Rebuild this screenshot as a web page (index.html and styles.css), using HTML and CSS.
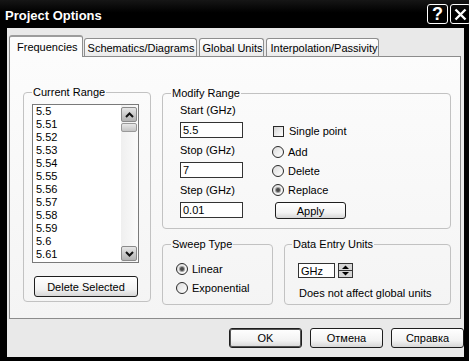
FILE: index.html
```html
<!DOCTYPE html>
<html lang="en">
  <head>
    <meta charset="UTF-8" />
    <title>Project Options</title>
    <link rel="stylesheet" href="styles.css">
  </head>

  <body>
    <div class="window">
      <div class="titlebar">
        <span class="title">Project Options</span>
        <div class="caption-buttons">
          <span class="cap-btn">?</span>
          <span class="cap-btn">
            <svg width="13" height="13" viewBox="0 0 13 13">
              <path d="M1.5 1.5 L11.5 11.5 M11.5 1.5 L1.5 11.5" stroke="#fff" stroke-width="2.4" />
            </svg>
          </span>
        </div>
      </div>

      <div class="client">
        <div class="tabs">
          <div class="tab active">Frequencies</div>
          <div class="tab">Schematics/Diagrams</div>
          <div class="tab">Global Units</div>
          <div class="tab">Interpolation/Passivity</div>
        </div>

        <div class="panel">
          <fieldset class="group range">
            <legend>Current Range</legend>
            <div class="listbox">
              <ul class="list">
                <li>5.5</li>
                <li>5.51</li>
                <li>5.52</li>
                <li>5.53</li>
                <li>5.54</li>
                <li>5.55</li>
                <li>5.56</li>
                <li>5.57</li>
                <li>5.58</li>
                <li>5.59</li>
                <li>5.6</li>
                <li>5.61</li>
              </ul>
              <div class="scrollbar">
                <div class="sb-btn">
                  <svg width="9" height="6" viewBox="0 0 9 6"><path d="M1 5 L4.5 1.5 L8 5" fill="none" stroke="#111" stroke-width="2" /></svg>
                </div>
                <div class="sb-thumb"></div>
                <div class="sb-btn down">
                  <svg width="9" height="6" viewBox="0 0 9 6"><path d="M1 1 L4.5 4.5 L8 1" fill="none" stroke="#111" stroke-width="2" /></svg>
                </div>
              </div>
            </div>
            <button class="btn delete">Delete Selected</button>
          </fieldset>

          <div class="right">
            <fieldset class="group modify">
              <legend>Modify Range</legend>
              <div class="modify-body">
                <div class="inputs">
                  <label class="field-label">Start (GHz)</label>
                  <input class="field" value="5.5">
                  <label class="field-label">Stop (GHz)</label>
                  <input class="field" value="7">
                  <label class="field-label">Step (GHz)</label>
                  <input class="field" value="0.01">
                </div>
                <div class="choices">
                  <div class="option check-row"><span class="check"></span>Single point</div>
                  <div class="option"><span class="radio"></span>Add</div>
                  <div class="option"><span class="radio"></span>Delete</div>
                  <div class="option"><span class="radio on"></span>Replace</div>
                  <button class="btn apply">Apply</button>
                </div>
              </div>
            </fieldset>

            <div class="bottom-row">
              <fieldset class="group sweep">
                <legend>Sweep Type</legend>
                <div class="option"><span class="radio on"></span>Linear</div>
                <div class="option"><span class="radio"></span>Exponential</div>
              </fieldset>

              <fieldset class="group units">
                <legend>Data Entry Units</legend>
                <div class="units-row">
                  <input class="field unit-field" value="GHz">
                  <svg class="spin" width="15" height="15" viewBox="0 0 15 15">
                    <rect x="0.5" y="0.5" width="14" height="14" fill="#d6d6d6" stroke="#333" />
                    <line x1="1" y1="7.5" x2="14" y2="7.5" stroke="#333" />
                    <path d="M4 6 L7.5 2.5 L11 6 Z" fill="#000" />
                    <path d="M4 9 L7.5 12.5 L11 9 Z" fill="#000" />
                  </svg>
                </div>
                <p class="units-note">Does not affect global units</p>
              </fieldset>
            </div>
          </div>
        </div>

        <div class="actions">
          <button class="btn action default">OK</button>
          <button class="btn action">Отмена</button>
          <button class="btn action">Справка</button>
        </div>
      </div>
    </div>
  </body>
</html>
```

FILE: styles.css
```css
* {
  box-sizing: border-box;
  margin: 0;
  padding: 0;
}

body {
  font-family: "Liberation Sans", Arial, sans-serif;
  font-size: 11px;
  color: #000;
  background-color: #000;
}

.window {
  width: 469px;
  height: 361px;
  background-color: #000;
  display: flex;
  flex-direction: column;
  overflow: hidden;
}

/* title bar */
.titlebar {
  height: 28px;
  flex: none;
  display: flex;
  align-items: center;
  justify-content: space-between;
  padding-left: 5px;
  color: #fff;
  background: linear-gradient(#161616, #000 45%);
}

.title {
  font-size: 13px;
  font-weight: bold;
  margin-top: 2px;
}

.caption-buttons {
  display: flex;
  gap: 2px;
  align-self: flex-start;
  margin-top: 4px;
  margin-right: -2px;
}

.cap-btn {
  width: 21px;
  height: 20px;
  border: 1px solid #fff;
  border-radius: 3px;
  display: flex;
  align-items: center;
  justify-content: center;
  font-size: 18px;
  font-weight: bold;
}

/* dialog body */
.client {
  flex: 1;
  margin: 0 5px 4px 7px;
  padding: 7px 3px 0 2px;
  background-color: #e9e9e9;
  display: flex;
  flex-direction: column;
}

.tabs {
  display: flex;
  align-items: flex-end;
  height: 22px;
  margin-bottom: -1px;
  position: relative;
  z-index: 1;
}

.tab {
  height: 18px;
  margin-bottom: 1px;
  margin-right: 2px;
  padding: 2px 1px 0 3px;
  line-height: 14px;
  border: 1px solid #8e8e8e;
  border-bottom: none;
  border-radius: 3px 3px 0 0;
  background: linear-gradient(#fff, #ebebeb);
  white-space: nowrap;
}

.tab.active {
  height: 22px;
  margin-bottom: 0;
  margin-right: 1px;
  padding: 3px 4px 0 7px;
  border-top: 2px solid #9c9c9c;
  background: #fcfcfc;
}

.panel {
  flex: none;
  height: 263px;
  border: 1px solid #8c8c8c;
  background: linear-gradient(#fcfcfc, #f4f4f4);
  display: grid;
  grid-template-columns: 128px 289px;
  column-gap: 11px;
  align-items: start;
  padding: 29px 0 0 13px;
}

/* group boxes */
.group {
  border: 1px solid #c2c2c2;
  border-radius: 4px;
  min-width: 0;
}

.group legend {
  padding: 0 1px;
  line-height: 13px;
}

.range {
  padding: 5px 11px 4px 8px;
}

.listbox {
  display: flex;
  height: 159px;
  border: 1px solid #7a7a7a;
  background-color: #fff;
}

.list {
  flex: 1;
  list-style: none;
  padding-left: 3px;
  overflow: hidden;
}

.list li {
  line-height: 13px;
}

.scrollbar {
  width: 17px;
  display: flex;
  flex-direction: column;
  padding: 2px 1px 1px 0;
  background: linear-gradient(90deg, #efefef, #fbfbfb);
}

.sb-btn {
  height: 15px;
  border: 1px solid #8a8a8a;
  border-radius: 2px;
  background: linear-gradient(#e6e6e6, #b2b2b2);
  display: flex;
  align-items: center;
  justify-content: center;
}

.sb-btn.down {
  margin-top: auto;
}

.sb-thumb {
  height: 9px;
  margin-top: 1px;
  border: 1px solid #999;
  border-radius: 2px;
  background: linear-gradient(#e8e8e8, #c4c4c4);
}

/* buttons */
.btn {
  font: inherit;
  color: #000;
  border: 1px solid #1e1e1e;
  border-radius: 3px;
  background: linear-gradient(#fff, #f2f2f2 65%, #d6d6d6);
}

.delete {
  display: block;
  width: 104px;
  height: 21px;
  margin: 13px 0 0 2px;
}

.apply {
  width: 71px;
  height: 17px;
  margin: 5px 0 0 3px;
}

/* modify range */
.right {
  display: flex;
  flex-direction: column;
  margin-top: 1px;
}

.modify {
  padding: 4px 0 9px 8px;
}

.modify-body {
  display: flex;
  gap: 29px;
  padding-left: 9px;
}

.inputs {
  width: 63px;
}

.field-label {
  display: block;
  line-height: 13px;
  margin-bottom: 5px;
}

.field {
  display: block;
  width: 63px;
  height: 16px;
  margin-bottom: 6px;
  padding: 0 2px;
  border: 1px solid #333;
  background-color: #fff;
  font: inherit;
  color: #000;
  outline: none;
}

.field:last-child {
  margin-bottom: 0;
}

.choices {
  display: flex;
  flex-direction: column;
  align-items: flex-start;
}

.option {
  display: flex;
  align-items: center;
  gap: 4px;
  height: 14px;
  margin-top: 5px;
  white-space: nowrap;
}

.check-row {
  gap: 5px;
  margin-top: 20px;
  margin-bottom: 2px;
}

.check {
  width: 11px;
  height: 11px;
  margin-left: 1px;
  border: 1px solid #2a2a2a;
  background: linear-gradient(135deg, #d4d4d4, #fff);
}

.radio {
  flex: none;
  width: 12px;
  height: 12px;
  border: 1px solid #2a2a2a;
  border-radius: 50%;
  background: linear-gradient(135deg, #dcdcdc, #fff);
  display: flex;
  align-items: center;
  justify-content: center;
}

.radio.on::after {
  content: "";
  width: 4px;
  height: 4px;
  border-radius: 50%;
  background-color: #4a4a4a;
  box-shadow: 0 0 0 1px #a0a0a0;
}

/* bottom groups */
.bottom-row {
  display: flex;
  gap: 11px;
  margin-top: 9px;
}

.sweep {
  width: 111px;
  padding: 6px 0 9px 8px;
}

.sweep .option {
  padding-left: 5px;
}

.units {
  flex: 1;
  padding: 12px 0 4px 7px;
}

.units-row {
  display: flex;
  align-items: center;
  margin-left: 6px;
}

.unit-field {
  width: 37px;
  height: 15px;
  margin: 0;
}

.spin {
  margin-left: 3px;
}

.units-note {
  margin: 9px 0 0 7px;
  line-height: 13px;
  white-space: nowrap;
}

/* dialog buttons */
.actions {
  display: flex;
  justify-content: flex-end;
  gap: 8px;
  margin: 9px -3px 0 0;
}

.action {
  width: 73px;
  height: 20px;
}

.action.default {
  box-shadow: inset 0 0 0 1px #555;
}
```
